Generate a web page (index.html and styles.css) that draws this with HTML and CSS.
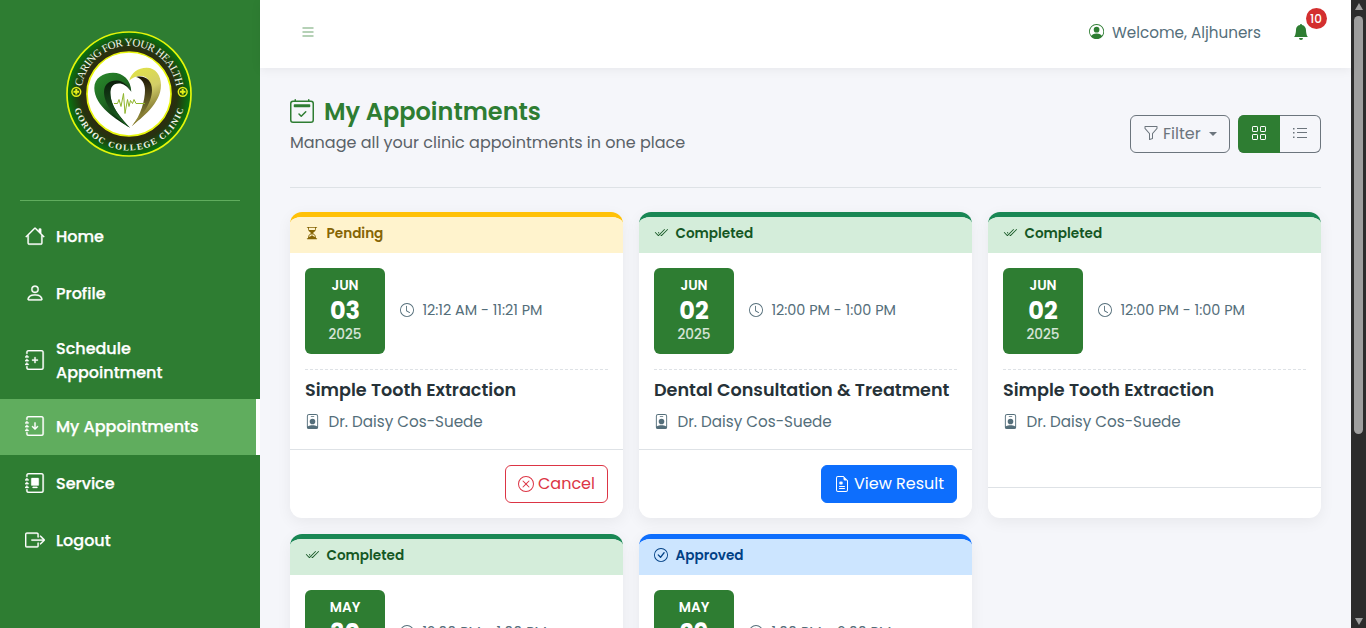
FILE: index.html
```html
<!DOCTYPE html>
<html lang="en">
<head>
<meta charset="utf-8">
<title>My Appointments</title>
<link rel="stylesheet" href="styles.css">
</head>
<body>
<svg class="defs" width="0" height="0" aria-hidden="true">
  <symbol id="journal" viewBox="0 0 16 16"><path d="M3 0h10a2 2 0 0 1 2 2v12a2 2 0 0 1-2 2H3a2 2 0 0 1-2-2v-1h1v1a1 1 0 0 0 1 1h10a1 1 0 0 0 1-1V2a1 1 0 0 0-1-1H3a1 1 0 0 0-1 1v1H1V2a2 2 0 0 1 2-2"/><path d="M1 5v-.5a.5.5 0 0 1 1 0V5h.5a.5.5 0 0 1 0 1h-2a.5.5 0 0 1 0-1zm0 3v-.5a.5.5 0 0 1 1 0V8h.5a.5.5 0 0 1 0 1h-2a.5.5 0 0 1 0-1zm0 3v-.5a.5.5 0 0 1 1 0v.5h.5a.5.5 0 0 1 0 1h-2a.5.5 0 0 1 0-1z"/></symbol>
  <symbol id="clock" viewBox="0 0 16 16"><path d="M8 3.5a.5.5 0 0 0-1 0V9a.5.5 0 0 0 .252.434l3.5 2a.5.5 0 0 0 .496-.868L8 8.71z"/><path d="M8 16A8 8 0 1 0 8 0a8 8 0 0 0 0 16m7-8A7 7 0 1 1 1 8a7 7 0 0 1 14 0"/></symbol>
  <symbol id="check-all" viewBox="0 0 16 16"><path d="M12.354 4.354a.5.5 0 0 0-.708-.708L5 10.293 1.854 7.146a.5.5 0 1 0-.708.708l3.5 3.5a.5.5 0 0 0 .708 0zm-4.208 7-.896-.897.707-.707.543.543 6.646-6.647a.5.5 0 0 1 .708.708l-7 7a.5.5 0 0 1-.708 0"/><path d="m5.354 7.146.896.897-.707.707-.897-.896a.5.5 0 1 1 .708-.708"/></symbol>
  <symbol id="badge" viewBox="0 0 16 16"><path d="M6.5 2a.5.5 0 0 0 0 1h3a.5.5 0 0 0 0-1zM11 8a3 3 0 1 1-6 0 3 3 0 0 1 6 0"/><path d="M4.5 0A2.5 2.5 0 0 0 2 2.5V14a2 2 0 0 0 2 2h8a2 2 0 0 0 2-2V2.5A2.5 2.5 0 0 0 11.5 0zM3 2.5A1.5 1.5 0 0 1 4.5 1h7A1.5 1.5 0 0 1 13 2.5v10.795a4.2 4.2 0 0 0-.776-.492C11.392 12.387 10.063 12 8 12s-3.392.387-4.224.803a4.2 4.2 0 0 0-.776.492z"/></symbol>
</svg>
<div class="app">
  <aside class="sidebar">
    <div class="brand">
      <svg class="logo" viewBox="0 0 128 128" width="128" height="128">
        <defs>
          <radialGradient id="ring" cx="64" cy="64" r="62" gradientUnits="userSpaceOnUse"><stop offset=".68" stop-color="#2f2c10"/><stop offset=".78" stop-color="#25330f"/><stop offset="1" stop-color="#07780f"/></radialGradient>
          <linearGradient id="leafL" x1="0" y1="0" x2=".6" y2="1"><stop offset="0" stop-color="#2a8a2c"/><stop offset=".5" stop-color="#1f6a22"/><stop offset="1" stop-color="#0a250c"/></linearGradient>
          <linearGradient id="leafR" x1="0" y1="0" x2=".3" y2="1"><stop offset="0" stop-color="#e3e544"/><stop offset=".5" stop-color="#d2ce68"/><stop offset="1" stop-color="#6a5d20"/></linearGradient>
          <linearGradient id="foldL" x1="0" y1="0" x2="0" y2="1"><stop offset="0" stop-color="#0b1d0b"/><stop offset="1" stop-color="#1d6a24"/></linearGradient>
          <linearGradient id="foldR" x1="0" y1="0" x2="0" y2="1"><stop offset="0" stop-color="#1b1603"/><stop offset="1" stop-color="#a39a42"/></linearGradient>
          <path id="arcTop" d="M16.500 68a47.700 47.700 0 1 1 95 0"/>
          <path id="arcBottom" d="M7.500 64a56.500 56.500 0 0 0 113 0"/>
        </defs>
        <circle cx="64" cy="64" r="62" fill="url(#ring)" stroke="#e4f50a" stroke-width="1.700"/>
        <circle cx="64" cy="64" r="42" fill="#fff" stroke="#e8f60d" stroke-width="1.700"/>
        <path d="M65 97.700C52 90 29.300 76 29.300 58C29.300 48 38 42.700 48 42.700C58 42.700 66 50 66.300 61.700C62 55 58 52 54 52C46 52 45 57 45 62C45 76 56 88 65 97.700z" fill="url(#leafL)"/>
        <path d="M65 97.700C53 90 39 76 39 62C39 53 46 50 52 50.500C58 51 63 55 66.300 61.700C62 56 58 53.500 54 53.500C47 53.500 45.500 58 45.500 63C45.500 77 57 90 65 97.700z" fill="url(#foldL)"/>
        <path d="M64.300 50.500C66 43 73 37.700 81.700 37.700C91 37.700 96 46 96 55C96 74 76 88 67 96C74 86 86 73 86 60C86 51 82 46 76 46C71 46 67 48 64.300 50.500z" fill="url(#leafR)"/>
        <path d="M67 96C76 85 80 70 80 60C80 53 76 48 71 47C80 45 87 50 87 60C87 73 76 88 67 96z" fill="url(#foldR)"/>
        <path d="M49 73.500h3.500l1.500-4 2 7 2.500-13 1.500 20 2.500-14 1.500 7 1.500-6 2 3 1.500-4 2 4h9" fill="none" stroke="#8fb52a" stroke-width="1"/>
        <g fill="none" stroke="#e4ee18" stroke-width="1.500"><circle cx="11.300" cy="61.800" r="4.400"/><path d="M11.300 59v5.600M8.500 61.800h5.600" stroke-width="2"/><circle cx="117.700" cy="61.800" r="4.400"/><path d="M117.700 59v5.600M114.900 61.800h5.600" stroke-width="2"/></g>
        <text class="logo-top"><textPath href="#arcTop" startOffset="50%" text-anchor="middle" textLength="135">CARING FOR YOUR HEALTH</textPath></text>
        <text class="logo-bottom"><textPath href="#arcBottom" startOffset="50%" text-anchor="middle" textLength="147">GORDOC COLLEGE CLINIC</textPath></text>
      </svg>
    </div>
    <nav class="menu">
      <a class="item low"><svg class="ico" viewBox="0 0 16 16"><path d="M8.707 1.500a1 1 0 0 0-1.414 0L.646 8.146a.5.5 0 0 0 .708.708L2 8.207V13.500A1.500 1.500 0 0 0 3.500 15h9a1.500 1.500 0 0 0 1.500-1.500V8.207l.646.647a.5.5 0 0 0 .708-.708L13 5.793V2.500a.5.5 0 0 0-.5-.5h-1a.5.5 0 0 0-.5.5v1.293zM13 7.207V13.500a.5.5 0 0 1-.5.5h-9a.5.5 0 0 1-.5-.5V7.207l5-5z"/></svg><span>Home</span></a>
      <a class="item low"><svg class="ico" viewBox="0 0 16 16"><path d="M8 8a3 3 0 1 0 0-6 3 3 0 0 0 0 6m2-3a2 2 0 1 1-4 0 2 2 0 0 1 4 0m4 8c0 1-1 1-1 1H3s-1 0-1-1 1-4 6-4 6 3 6 4m-1-.004c-.001-.246-.154-.986-.832-1.664C11.516 10.680 10.289 10 8 10s-3.516.68-4.168 1.332c-.678.678-.83 1.418-.832 1.664z"/></svg><span>Profile</span></a>
      <a class="item low"><svg class="ico" viewBox="0 0 16 16"><use href="#journal"/><path d="M8 5.500a.5.5 0 0 1 .5.5v1.500H10a.5.5 0 0 1 0 1H8.500V10a.5.5 0 0 1-1 0V8.500H6a.5.5 0 0 1 0-1h1.500V6a.5.5 0 0 1 .5-.5"/></svg><span>Schedule<br>Appointment</span></a>
      <a class="item active"><svg class="ico" viewBox="0 0 16 16"><use href="#journal"/><path d="M8 5a.5.5 0 0 1 .5.5v3.793l1.146-1.147a.5.5 0 0 1 .708.708l-2 2a.5.5 0 0 1-.708 0l-2-2a.5.5 0 1 1 .708-.708L7.500 9.293V5.500A.5.5 0 0 1 8 5"/></svg><span>My Appointments</span></a>
      <a class="item"><svg class="ico" viewBox="0 0 16 16"><use href="#journal"/><path d="M5.500 4a.5.5 0 0 0-.5.5v5a.5.5 0 0 0 .5.5h5a.5.5 0 0 0 .5-.5v-5a.5.5 0 0 0-.5-.5zm1 7a.5.5 0 0 0 0 1h3a.5.5 0 0 0 0-1z"/></svg><span>Service</span></a>
      <a class="item"><svg class="ico" viewBox="0 0 16 16"><path d="M10 12.500a.5.5 0 0 1-.5.5h-8a.5.5 0 0 1-.5-.5v-9a.5.5 0 0 1 .5-.5h8a.5.5 0 0 1 .5.5v2a.5.5 0 0 0 1 0v-2A1.500 1.500 0 0 0 9.500 2h-8A1.500 1.500 0 0 0 0 3.500v9A1.500 1.500 0 0 0 1.500 14h8a1.500 1.500 0 0 0 1.500-1.500v-2a.5.5 0 0 0-1 0z"/><path d="M15.854 8.354a.5.5 0 0 0 0-.708l-3-3a.5.5 0 0 0-.708.708L14.293 7.500H5.500a.5.5 0 0 0 0 1h8.793l-2.147 2.146a.5.5 0 0 0 .708.708z"/></svg><span>Logout</span></a>
    </nav>
  </aside>

  <div class="main">
    <header class="topbar">
      <svg class="burger" viewBox="0 0 12 10" width="12" height="10"><path d="M.5 0h11v2H.5zM.5 4h11v2H.5zM.5 8h11v2H.5z"/></svg>
      <div class="user">
        <svg class="user-ico" viewBox="0 0 16 16"><path d="M11 6a3 3 0 1 1-6 0 3 3 0 0 1 6 0"/><path fill-rule="evenodd" d="M0 8a8 8 0 1 1 16 0A8 8 0 0 1 0 8m8-7a7 7 0 0 0-5.468 11.370C3.242 11.226 4.805 10 8 10s4.757 1.225 5.468 2.370A7 7 0 0 0 8 1"/></svg>
        <span class="welcome">Welcome, Aljhuners</span>
        <div class="bell"><svg viewBox="0 0 16 16" width="16" height="16"><path d="M8 16a2 2 0 0 0 2-2H6a2 2 0 0 0 2 2m.995-14.901a1 1 0 1 0-1.990 0A5 5 0 0 0 3 6c0 1.098-.5 6-2 7h14c-1.500-1-2-5.902-2-7 0-2.420-1.720-4.440-4.005-4.901"/></svg><span class="count">10</span></div>
      </div>
    </header>

    <main class="content">
      <div class="page-head">
        <div>
          <h1><svg class="h-ico" viewBox="0 0 16 16"><path d="M10.854 8.146a.5.5 0 0 1 0 .708l-3 3a.5.5 0 0 1-.708 0l-1.500-1.500a.5.5 0 0 1 .708-.708L7.500 10.793l2.646-2.647a.5.5 0 0 1 .708 0"/><path d="M3.500 0a.5.5 0 0 1 .5.5V1h8V.5a.5.5 0 0 1 1 0V1h1a2 2 0 0 1 2 2v11a2 2 0 0 1-2 2H2a2 2 0 0 1-2-2V3a2 2 0 0 1 2-2h1V.5a.5.5 0 0 1 .5-.5M2 2a1 1 0 0 0-1 1v11a1 1 0 0 0 1 1h12a1 1 0 0 0 1-1V3a1 1 0 0 0-1-1z"/><path d="M2.500 4a.5.5 0 0 1 .5-.5h10a.5.5 0 0 1 .5.5v1a.5.5 0 0 1-.5.5H3a.5.5 0 0 1-.5-.5z"/></svg><span>My Appointments</span></h1>
          <p class="sub"><span>Manage all your clinic appointments in one place</span></p>
        </div>
        <div class="tools">
          <button class="filter"><svg class="i16" viewBox="0 0 16 16"><path d="M1.500 1.500A.5.5 0 0 1 2 1h12a.5.5 0 0 1 .5.5v2a.5.5 0 0 1-.128.334L10 8.692V13.500a.5.5 0 0 1-.342.474l-3 1A.5.5 0 0 1 6 14.500V8.692L1.628 3.834A.5.5 0 0 1 1.500 3.500zm1 .5v1.308l4.372 4.858A.5.5 0 0 1 7 8.500v5.306l2-.666V8.500a.5.5 0 0 1 .128-.334L13.500 3.308V2z"/></svg><span>Filter</span><i class="caret"></i></button>
          <div class="views">
            <button class="view on"><svg class="i16 outline" viewBox="0 0 16 16"><rect x="1.500" y="1.500" width="5" height="5" rx=".6"/><rect x="9.500" y="1.500" width="5" height="5" rx=".6"/><rect x="1.500" y="9.500" width="5" height="5" rx=".6"/><rect x="9.500" y="9.500" width="5" height="5" rx=".6"/></svg></button>
            <button class="view"><svg class="i16" viewBox="0 0 16 16"><path d="M5 3h10v1H5zM5 7h10v1H5zM5 12h10v1H5z"/><path d="M1 3h1.500v1.500H1zM1 7h1.500v1.500H1zM1 11.500h1.500V13H1z"/></svg></button>
          </div>
        </div>
      </div>

      <div class="cards">
        <article class="card pending">
          <div class="status"><svg class="i14" viewBox="0 0 16 16"><path d="M2.500 15a.5.5 0 1 1 0-1h1v-1a4.500 4.500 0 0 1 2.557-4.060c.29-.139.443-.377.443-.59v-.7c0-.213-.154-.451-.443-.59A4.500 4.500 0 0 1 3.500 3V2h-1a.5.5 0 0 1 0-1h11a.5.5 0 0 1 0 1h-1v1a4.500 4.500 0 0 1-2.557 4.060c-.29.139-.443.377-.443.59v.7c0 .213.154.451.443.59A4.500 4.500 0 0 1 12.500 13v1h1a.5.5 0 0 1 0 1zm2-13v1c0 .537.12 1.045.337 1.500h6.326c.216-.455.337-.963.337-1.500V2zm3 6.350c0 .701-.478 1.236-1.011 1.492A3.500 3.500 0 0 0 4.500 13s.866-1.299 3-1.480zm1 0v3.170c2.134.181 3 1.480 3 1.480a3.500 3.500 0 0 0-1.989-3.158C8.978 9.586 8.500 9.052 8.500 8.351z"/></svg><span>Pending</span></div>
          <div class="body">
            <div class="when"><div class="date"><b class="mon">JUN</b><b class="day">03</b><span class="yr">2025</span></div><svg class="i14" viewBox="0 0 16 16"><use href="#clock"/></svg><span class="time">12:12 AM - 11:21 PM</span></div>
            <h2><span>Simple Tooth Extraction</span></h2>
            <p class="doc"><svg class="i15" viewBox="0 0 16 16"><use href="#badge"/></svg><span>Dr. Daisy Cos-Suede</span></p>
          </div>
          <div class="foot"><button class="btn cancel"><svg class="i16" viewBox="0 0 16 16"><path d="M8 15A7 7 0 1 1 8 1a7 7 0 0 1 0 14m0 1A8 8 0 1 0 8 0a8 8 0 0 0 0 16"/><path d="M4.646 4.646a.5.5 0 0 1 .708 0L8 7.293l2.646-2.647a.5.5 0 0 1 .708.708L8.707 8l2.647 2.646a.5.5 0 0 1-.708.708L8 8.707l-2.646 2.647a.5.5 0 0 1-.708-.708L7.293 8 4.646 5.354a.5.5 0 0 1 0-.708"/></svg><span>Cancel</span></button></div>
        </article>

        <article class="card completed">
          <div class="status"><svg class="i14" viewBox="0 0 16 16"><use href="#check-all"/></svg><span>Completed</span></div>
          <div class="body">
            <div class="when"><div class="date"><b class="mon">JUN</b><b class="day">02</b><span class="yr">2025</span></div><svg class="i14" viewBox="0 0 16 16"><use href="#clock"/></svg><span class="time">12:00 PM - 1:00 PM</span></div>
            <h2><span>Dental Consultation &amp; Treatment</span></h2>
            <p class="doc"><svg class="i15" viewBox="0 0 16 16"><use href="#badge"/></svg><span>Dr. Daisy Cos-Suede</span></p>
          </div>
          <div class="foot"><button class="btn result"><svg class="i16" viewBox="0 0 16 16"><path d="M7.500 5.500a.5.5 0 0 0-1 0v.634l-.549-.317a.5.5 0 1 0-.5.866L6 7l-.549.317a.5.5 0 1 0 .5.866l.549-.317V8.500a.5.5 0 1 0 1 0v-.634l.549.317a.5.5 0 1 0 .5-.866L8 7l.549-.317a.5.5 0 1 0-.5-.866l-.549.317zm-2 4.500a.5.5 0 0 0 0 1h5a.5.5 0 0 0 0-1zm0 2a.5.5 0 0 0 0 1h5a.5.5 0 0 0 0-1z"/><path d="M14 14V4.500L9.500 0H4a2 2 0 0 0-2 2v12a2 2 0 0 0 2 2h8a2 2 0 0 0 2-2M9.500 3A1.500 1.500 0 0 0 11 4.500h2V14a1 1 0 0 1-1 1H4a1 1 0 0 1-1-1V2a1 1 0 0 1 1-1h5.500z"/></svg><span>View Result</span></button></div>
        </article>

        <article class="card completed">
          <div class="status"><svg class="i14" viewBox="0 0 16 16"><use href="#check-all"/></svg><span>Completed</span></div>
          <div class="body">
            <div class="when"><div class="date"><b class="mon">JUN</b><b class="day">02</b><span class="yr">2025</span></div><svg class="i14" viewBox="0 0 16 16"><use href="#clock"/></svg><span class="time">12:00 PM - 1:00 PM</span></div>
            <h2><span>Simple Tooth Extraction</span></h2>
            <p class="doc"><svg class="i15" viewBox="0 0 16 16"><use href="#badge"/></svg><span>Dr. Daisy Cos-Suede</span></p>
          </div>
          <div class="foot"></div>
        </article>

        <article class="card completed">
          <div class="status"><svg class="i14" viewBox="0 0 16 16"><use href="#check-all"/></svg><span>Completed</span></div>
          <div class="body">
            <div class="when"><div class="date"><b class="mon">MAY</b><b class="day">30</b><span class="yr">2025</span></div><svg class="i14" viewBox="0 0 16 16"><use href="#clock"/></svg><span class="time">12:00 PM - 1:00 PM</span></div>
          </div>
        </article>

        <article class="card approved">
          <div class="status"><svg class="i14" viewBox="0 0 16 16"><path d="M8 15A7 7 0 1 1 8 1a7 7 0 0 1 0 14m0 1A8 8 0 1 0 8 0a8 8 0 0 0 0 16"/><path d="m10.970 4.970-.02.022-3.473 4.425-2.093-2.094a.75.75 0 0 0-1.060 1.060L6.970 11.030a.75.75 0 0 0 1.079-.02l3.992-4.990a.75.75 0 0 0-1.071-1.050"/></svg><span>Approved</span></div>
          <div class="body">
            <div class="when"><div class="date"><b class="mon">MAY</b><b class="day">29</b><span class="yr">2025</span></div><svg class="i14" viewBox="0 0 16 16"><use href="#clock"/></svg><span class="time">1:00 PM - 2:00 PM</span></div>
          </div>
        </article>
      </div>
    </main>
  </div>

  <div class="scrollbar"><i class="arrow up"></i><i class="thumb"></i><i class="arrow down"></i></div>
</div>
</body>
</html>
```
FILE: styles.css
```css
* { box-sizing: border-box; }
html, body { margin: 0; height: 628px; overflow: hidden; }
body { font-family: Poppins, Inter, "Open Sans", sans-serif; font-size: 16px; line-height: 24px; color: #263238; background: #f5f6fa; }
.defs { display: block; height: 0; }
svg { fill: currentColor; flex: none; display: block; }
button { font: inherit; margin: 0; background: transparent; }
h1, h2, p { margin: 0; }
span, h1 { white-space: nowrap; }
.app { display: flex; height: 628px; overflow: hidden; }

.sidebar { width: 260px; flex: none; background: #2e7d32; color: #fff; }
.brand { height: 201px; margin: 0 20px; padding: 30px 0 0 45px; border-bottom: 1px solid #60ad5e; }
.logo-top, .logo-bottom { font-family: "Liberation Serif", serif; fill: #f1f5ea; }
.logo-top { font-size: 11px; }
.logo-bottom { font-size: 8.8px; font-weight: bold; }
.menu { display: flex; flex-direction: column; gap: 1px; padding-top: 7px; }
.item { display: flex; align-items: center; gap: 11.5px; min-height: 56px; padding: 14px 20px 14px 24.5px; font-weight: 500; -webkit-text-stroke: .25px currentColor; }
.item.low { padding-top: 15px; padding-bottom: 13px; }
.item.active { background: #60ad5e; border-right: 4px solid #fff; }
.ico { width: 20px; height: 20px; margin-bottom: 3px; stroke: currentColor; stroke-width: .25; }

.main { flex: 1; min-width: 0; }
.topbar { height: 68px; background: #fff; box-shadow: 0 2px 10px rgba(0,0,0,.06); display: flex; justify-content: space-between; align-items: center; padding: 0 42px 4px 42px; position: relative; }
.burger { color: #2e7d32; opacity: .35; }
.user { display: flex; align-items: center; color: #546e7a; }
.user-ico { width: 15.2px; height: 15.2px; color: #2e7d32; margin: 0 8px 1px 0; }
.welcome { width: 149px; font-size: 15.2px; padding-top: 1px; }
.bell { position: relative; color: #2e7d32; margin-left: 32px; }
.count { position: absolute; left: 12.5px; top: -16.5px; width: 21px; height: 21px; border-radius: 50%; background: #d32f2f; color: #fff; font-size: 12px; font-weight: 500; line-height: 21px; text-align: center; }

.content { padding: 28px 30px 0; }
.page-head { display: flex; justify-content: space-between; height: 92px; border-bottom: 1px solid #dee2e6; margin-bottom: 24px; }
h1 { display: flex; align-items: center; gap: 10px; font-size: 24px; line-height: 30px; font-weight: 600; color: #2e7d32; }
h1 span { padding-top: 1px; }
.h-ico { width: 24px; height: 24px; margin-bottom: 1px; }
.sub { color: #5a6268; margin-top: 4px; }
.tools { display: flex; gap: 8px; padding-top: 19px; }
.filter { display: flex; align-items: center; width: 100px; height: 38px; border: 1px solid #6c757d; border-radius: 6px; color: #6c757d; padding: 0 12px; }
.filter .i16 { margin-bottom: 2px; }
.filter span { margin-left: 4px; }
.i16 { width: 16px; height: 16px; }
.i14 { width: 14px; height: 14px; }
.i15 { width: 15px; height: 15px; }
.outline { fill: none; stroke: currentColor; }
.caret { border: 4px solid transparent; border-top-color: currentColor; border-bottom: 0; margin-left: auto; }
.views { display: flex; width: 83px; height: 38px; border-radius: 6px; border: 1px solid #6c757d; border-left: 0; }
.view { flex: 1; border: 0; color: #6c757d; padding: 0 0 2px; display: flex; align-items: center; justify-content: center; }
.view.on { background: #2e7d32; color: #fff; flex: 0 0 42px; margin: -1px 0; border-radius: 6px 0 0 6px; }

.cards { display: grid; grid-template-columns: repeat(3, 1fr); gap: 16px; grid-auto-rows: 306px; }
.card { display: flex; flex-direction: column; background: #fff; border-radius: 12px; border-top: 5px solid; overflow: hidden; box-shadow: 0 4px 15px rgba(0,0,0,.06); }
.pending { border-top-color: #ffc107; }
.completed { border-top-color: #198754; }
.approved { border-top-color: #0d6efd; }
.status { height: 36px; flex: none; display: flex; align-items: center; gap: 7.5px; padding: 0 15px 1px; font-size: 13.6px; font-weight: 600; }
.status .i14 { margin-bottom: 3px; }
.status span { padding-bottom: 1px; }
.pending .status { background: #fff3cd; color: #856404; }
.completed .status { background: #d4edda; color: #155724; }
.approved .status { background: #cce5ff; color: #004085; }
.body { flex: 1; padding: 15px 15px 0; }
.when { display: flex; align-items: center; height: 102px; padding-bottom: 15px; border-bottom: 1px dashed #dee2e6; color: #546e7a; font-size: 14.4px; }
.when > .i14 { margin: 0 8.400px 2px 15px; }
.time { padding-bottom: 2px; }
.date { width: 80px; height: 86px; border-radius: 6px; background: #2e7d32; color: #fff; display: flex; flex-direction: column; align-items: center; padding-top: 7px; }
.mon { font-size: 13.6px; line-height: 21px; font-weight: 600; }
.day { font-size: 24px; line-height: 29px; font-weight: 700; }
.yr { font-size: 13.6px; line-height: 20px; opacity: .8; font-weight: 500; }
h2 { font-size: 17.600px; line-height: 21px; font-weight: 600; color: #263238; padding-top: 10px; }
.doc { display: flex; align-items: center; gap: 8.400px; margin-top: 9px; color: #546e7a; font-size: 15.2px; }
.doc .i15 { margin-bottom: 1px; }
.foot { border-top: 1px solid #dee2e6; padding: 15px; display: flex; justify-content: flex-end; }
.btn { height: 38px; border: 1px solid; border-radius: 6px; display: flex; align-items: center; gap: 4px; padding: 0 12px; }
.btn .i16 { margin-bottom: 1px; }
.cancel { width: 103px; color: #dc3545; }
.result { width: 136px; background: #0d6efd; border-color: #0d6efd; color: #fff; }

.scrollbar { width: 15px; flex: none; background: #2c2c2c; display: flex; flex-direction: column; align-items: center; padding: 3px 0; }
.arrow { border: 4.500px solid transparent; flex: none; }
.up { border-bottom: 7px solid #9f9f9f; border-top: 0; }
.down { border-top: 7px solid #9f9f9f; border-bottom: 0; margin-top: auto; }
.thumb { width: 9px; height: 418px; border-radius: 5px; background: #9f9f9f; margin-top: 6px; }
```
